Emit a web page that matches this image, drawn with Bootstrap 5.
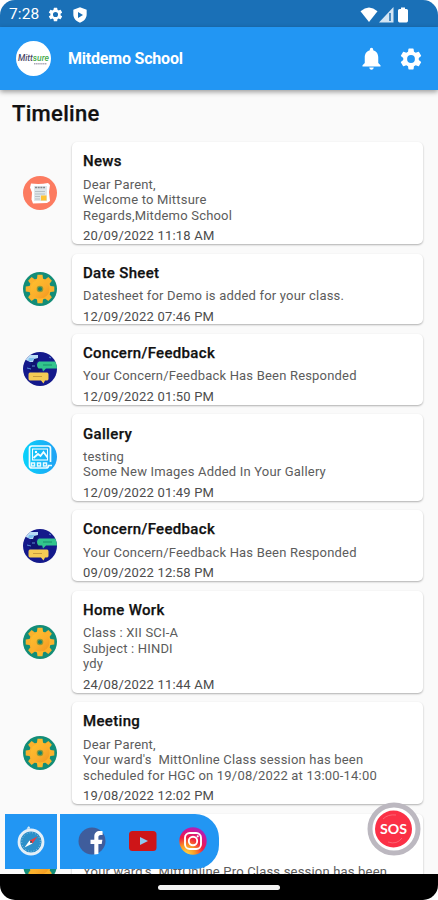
<!DOCTYPE html>
<html lang="en">
<head>
<meta charset="utf-8">
<meta name="viewport" content="width=device-width, initial-scale=1">
<title>Mitdemo School</title>
<link href="https://cdn.jsdelivr.net/npm/bootstrap@5.3.0/dist/css/bootstrap.min.css" rel="stylesheet">
<style>
body{font-family:Roboto,"Liberation Sans",sans-serif;background:#fff;color:#111}
.phone{width:438px;height:900px;border-radius:15px;background:#fafafa}
.status-bar{height:27px;background:#1a70b7;padding:2px 30px 0 9px}
.status-bar .clock{font-size:15.5px;letter-spacing:.1px;line-height:25px;width:38px}
.app-bar{height:63px;background:#2296f3;padding:0 14px 0 16px;box-shadow:0 2px 5px rgba(0,0,0,.38);z-index:2}
.app-bar .brand{font-size:16px;font-weight:700;letter-spacing:-.2px;margin-left:17px}
.app-bar .settings{margin-left:13.500px}
h1{font-size:22px;font-weight:500;line-height:26px;letter-spacing:.3px;margin:11px 0 15px 12px;-webkit-text-stroke:.25px #111}
.feed{gap:9.4px;padding-right:15px}
.entry-icon{width:72px;padding-left:22.5px}
.entry{border:0;border-radius:5px;padding:9.3px 11px .2px;box-shadow:0 1px 2px rgba(0,0,0,.3);background:#fff}
.entry h2{font-size:15px;font-weight:500;line-height:20px;letter-spacing:.33px;margin:0 0 5.3px;-webkit-text-stroke:.25px #111;color:#111}
.entry p,.entry time{font-size:13px;line-height:15.6px;letter-spacing:.19px;color:#5c5c5c;margin:0}
.entry p{white-space:pre;margin-bottom:4.9px}
.entry time{display:block;color:#4c4c4c;margin-bottom:.1px}
.home-bar{height:26px;background:#000}
.home-bar span{width:122px;height:5px;border-radius:3px;background:#f4f4f4}
.dock{left:5px;top:813.5px;height:55.5px;gap:3px}
.dock .tile{width:52px;background:#2296f3}
.dock .links{width:159px;background:#2296f3;border-radius:0 24px 24px 0;padding:0 12px 0 18px}
.sos{left:367px;top:802px}
svg{display:block;flex:none}
</style>
<script src="https://cdn.jsdelivr.net/npm/bootstrap@5.3.0/dist/js/bootstrap.bundle.min.js"></script>
</head>
<body>
<svg width="0" height="0" class="position-absolute" aria-hidden="true">
<defs>
<linearGradient id="gold" x1="0" y1="0" x2="1" y2="1"><stop offset="0" stop-color="#ffc12d"/><stop offset=".55" stop-color="#fbae2c"/><stop offset="1" stop-color="#f1951f"/></linearGradient>
<linearGradient id="sky" x1="0" y1="0" x2="1" y2="0"><stop offset="0" stop-color="#08d2fb"/><stop offset="1" stop-color="#20a2f4"/></linearGradient>
<radialGradient id="insta" cx=".25" cy="1" r="1.1"><stop offset="0" stop-color="#ffd84a"/><stop offset=".3" stop-color="#fb9a22"/><stop offset=".58" stop-color="#ef1d42"/><stop offset=".82" stop-color="#cf1597"/><stop offset="1" stop-color="#9b28c7"/></radialGradient>
<clipPath id="round"><circle cx="17" cy="17" r="17"/></clipPath>
<symbol id="cog" viewBox="0 0 24 24"><path fill-rule="evenodd" d="M19.14 12.94c.04-.3.06-.61.06-.94s-.02-.64-.07-.94l2.03-1.58a.49.49 0 0 0 .12-.61l-1.92-3.32a.49.49 0 0 0-.59-.22l-2.39.96c-.5-.38-1.03-.7-1.62-.94l-.36-2.54a.48.48 0 0 0-.48-.41h-3.84a.47.47 0 0 0-.47.41l-.36 2.54c-.59.24-1.13.57-1.62.94l-2.39-.96a.48.48 0 0 0-.59.22L2.74 8.87a.47.47 0 0 0 .12.61l2.03 1.58c-.05.3-.09.63-.09.94s.02.64.07.94l-2.03 1.58a.49.49 0 0 0-.12.61l1.92 3.32c.12.22.37.29.59.22l2.39-.96c.5.38 1.03.7 1.62.94l.36 2.54c.05.24.24.41.48.41h3.84c.24 0 .44-.17.47-.41l.36-2.54c.59-.24 1.13-.56 1.62-.94l2.39.96c.22.08.47 0 .59-.22l1.92-3.32a.47.47 0 0 0-.12-.61zM12 15.6A3.6 3.6 0 1 1 12 8.4a3.6 3.6 0 0 1 0 7.2z"/></symbol>
<symbol id="gear" viewBox="0 0 34 34"><circle cx="17" cy="17" r="17" fill="#128d78"/>
<g fill="#fbb12c"><circle cx="17" cy="17" r="10.8"/><path d="M13.800 8 14.500 2.700h5L20.200 8v18l-.7 5.300h-5L13.800 26z" fill="#fdb82d"/><path d="M13.800 8 14.500 2.700h5L20.200 8v18l-.7 5.300h-5L13.800 26z" transform="rotate(45 17 17)"/><path d="M13.800 8 14.500 2.700h5L20.200 8v18l-.7 5.300h-5L13.800 26z" transform="rotate(90 17 17)"/><path d="M13.800 8 14.500 2.700h5L20.200 8v18l-.7 5.300h-5L13.800 26z" transform="rotate(135 17 17)"/></g>
<circle cx="17" cy="17" r="9.500" fill="url(#gold)"/><circle cx="17" cy="17" r="3.300" fill="#8d9a38"/><circle cx="17" cy="17" r="2.100" fill="#188470"/></symbol>
<symbol id="chat" viewBox="0 0 34 34"><g clip-path="url(#round)"><path fill="#14198b" d="M0 0h34v34H0z"/><path fill="#0c105f" d="M10 2c9 2 5 7 2 10l7 5-4 4-9-2z" opacity=".6"/><path fill="#b9dcf6" d="M3 3h12v3l-4 1-1 3H7L3 8z"/><path fill="#7fc1ee" d="M6 6h6l-3 3H5z"/><path fill="#32c48d" d="M16 9.500h18v7H23l-3 3-.8-3H15.500q-1.500-1-1.500-3.500 0-3 2-3.500z"/><path stroke="#178f68" d="M20 13h9"/><path fill="#f4cb55" d="M7 20.500h17q1.500 0 1.500 2V27q0 1.500-2 1.500H22l-1.500 3-2.500-3H7q-1.500 0-1.500-2v-4q0-2 1.500-2z"/><path stroke="#c69b3d" d="M10 24.500h9"/><path stroke="#5a8fd4" d="M4 16l4 1M26 5l2 1M9 14h3"/></g></symbol>
<symbol id="news" viewBox="0 0 34 34"><circle cx="17" cy="17" r="17" fill="#fc7b60"/><path fill="#fff" d="M8 7.500q9 1 17-.5l2 2-1 7 1 9-3 2-14 .5-1.500-4 .5-7-2-5z"/><path fill="#dfe7ea" d="M11 10h13v15H11z"/><path stroke="#85888b" stroke-width="1.500" stroke-dasharray="2 .7" d="M12 11.500h10"/><path stroke="#b7c0c5" d="M12 15.500h10M12 18h10M12 20.500h5M12 23h5"/><path fill="#ffc334" d="M18 19.500h5.500v5H18z"/></symbol>
<symbol id="gallery" viewBox="0 0 34 34"><circle cx="17" cy="17" r="17" fill="url(#sky)"/><g fill="none" stroke="#f2fdff" stroke-width="1.700"><path d="M27.500 22V8.500q0-2.500-2.500-2.500H9Q6.500 6 6.500 8.500v17Q6.500 28 9 28h14q2.500 0 2.500-2.500H29"/><rect x="9.500" y="9" width="15" height="11" stroke-width="1.100"/><path d="m10.500 18 4.500-4 2.500 2 3-4 4 5.500" stroke-width="1.900"/></g><circle cx="13" cy="12" r="1.200" fill="#fff"/><g fill="none" stroke="#e9faff" stroke-width="1.500"><rect x="8.500" y="23" width="3" height="3"/><rect x="14.500" y="23" width="3" height="3"/><rect x="20.500" y="23" width="3" height="3"/></g></symbol>
</defs>
</svg>

<div class="phone position-relative overflow-hidden d-flex flex-column">
  <div class="status-bar d-flex align-items-center text-white flex-shrink-0">
    <span class="clock">7:28</span>
    <svg width="17" height="17" viewBox="0 0 24 24" fill="#fff"><use href="#cog"/></svg>
    <svg class="ms-2" width="16" height="16" viewBox="0 0 24 24" fill="#fff" fill-rule="evenodd"><path d="M12 .5 2 4v7c0 6 4 10.500 10 12.500C18 21.500 22 17 22 11V4zM9 7.500l7.500 4.500L9 16.500z"/></svg>
    <div class="ms-auto d-flex align-items-center">
      <svg width="18" height="16" viewBox="0 0 18 16" fill="#fff"><path d="M.5 4.200Q9-3 17.500 4.200L9 15z"/></svg>
      <svg width="16" height="16" viewBox="0 0 16 16"><path d="M15.500 0v15.500H1z" fill="#d3e5f4"/><path d="M12 6v8" stroke="#4b8cc2" stroke-width="2"/></svg>
      <svg width="10" height="16" viewBox="0 0 10 16" fill="#fff" class="ms-1"><path d="M3 .5h4V2h1.500Q10 2 10 3.500v10q0 2-1.500 2h-7Q0 15.500 0 13.500v-10Q0 2 1.500 2H3z"/></svg>
    </div>
  </div>

  <header class="app-bar d-flex align-items-center text-white flex-shrink-0 position-relative">
    <svg width="35" height="35" viewBox="0 0 35 35"><circle cx="17.500" cy="17.500" r="17.500" fill="#fff"/><g font-family="Roboto,sans-serif" font-style="italic" font-weight="500"><text x="2" y="20" font-size="8.500" fill="#4a4769" textLength="31" lengthAdjust="spacingAndGlyphs">Mitt<tspan fill="#45aa4c">sure</tspan></text></g><path d="M18 22.700h13" stroke="#aaa6b5" stroke-width="1.500" stroke-dasharray="1.500 .6"/></svg>
    <span class="brand">Mitdemo School</span>
    <svg class="ms-auto" width="27" height="27" viewBox="0 0 24 24" fill="#fff"><path d="M12 22c1.100 0 2-.9 2-2h-4c0 1.100.89 2 2 2zm6-6v-5c0-3.070-1.640-5.640-4.500-6.320V4a1.500 1.500 0 0 0-3 0v.68C7.630 5.360 6 7.920 6 11v5l-2 2v1h16v-1z"/></svg>
    <svg class="settings" width="26" height="26" viewBox="0 0 24 24" fill="#fff"><use href="#cog"/></svg>
  </header>

  <main class="flex-grow-1 overflow-hidden">
    <h1>Timeline</h1>
    <div class="feed d-flex flex-column">
      <div class="d-flex align-items-center"><div class="entry-icon"><svg width="34" height="34"><use href="#news"/></svg></div><article class="entry card flex-grow-1"><h2>News</h2><p>Dear Parent,
Welcome to Mittsure
Regards,Mitdemo School</p><time>20/09/2022 11:18 AM</time></article></div>
      <div class="d-flex align-items-center"><div class="entry-icon"><svg width="34" height="34"><use href="#gear"/></svg></div><article class="entry card flex-grow-1"><h2>Date Sheet</h2><p>Datesheet for Demo is added for your class.</p><time>12/09/2022 07:46 PM</time></article></div>
      <div class="d-flex align-items-center"><div class="entry-icon"><svg width="34" height="34"><use href="#chat"/></svg></div><article class="entry card flex-grow-1"><h2>Concern/Feedback</h2><p>Your Concern/Feedback Has Been Responded</p><time>12/09/2022 01:50 PM</time></article></div>
      <div class="d-flex align-items-center"><div class="entry-icon"><svg width="34" height="34"><use href="#gallery"/></svg></div><article class="entry card flex-grow-1"><h2>Gallery</h2><p>testing
Some New Images Added In Your Gallery</p><time>12/09/2022 01:49 PM</time></article></div>
      <div class="d-flex align-items-center"><div class="entry-icon"><svg width="34" height="34"><use href="#chat"/></svg></div><article class="entry card flex-grow-1"><h2>Concern/Feedback</h2><p>Your Concern/Feedback Has Been Responded</p><time>09/09/2022 12:58 PM</time></article></div>
      <div class="d-flex align-items-center"><div class="entry-icon"><svg width="34" height="34"><use href="#gear"/></svg></div><article class="entry card flex-grow-1"><h2>Home Work</h2><p>Class : XII SCI-A
Subject : HINDI
ydy</p><time>24/08/2022 11:44 AM</time></article></div>
      <div class="d-flex align-items-center"><div class="entry-icon"><svg width="34" height="34"><use href="#gear"/></svg></div><article class="entry card flex-grow-1"><h2>Meeting</h2><p>Dear Parent,
Your ward's  MittOnline Class session has been
scheduled for HGC on 19/08/2022 at 13:00-14:00</p><time>19/08/2022 12:02 PM</time></article></div>
      <div class="d-flex align-items-center"><div class="entry-icon"><svg width="34" height="34"><use href="#gear"/></svg></div><article class="entry card flex-grow-1"><h2>&nbsp;</h2><p>&nbsp;
Your ward's  MittOnline Pro Class session has been
&nbsp;</p><time>&nbsp;</time></article></div>
    </div>
  </main>

  <div class="home-bar d-flex align-items-center justify-content-center flex-shrink-0"><span></span></div>

  <nav class="dock position-absolute d-flex">
    <div class="tile d-flex align-items-center justify-content-center">
      <svg width="28" height="30" viewBox="0 0 28 30"><circle cx="14" cy="16" r="12" fill="#2b8fc9" stroke="#e3eff8" stroke-width="2.800"/><path d="M9.500 2.500 12 0l1 2.500z" fill="#dcebf6"/><path d="M10.500 3q1-2 2.500-1" stroke="#dcebf6" fill="none"/><circle cx="14" cy="16" r="9.300" fill="none" stroke="#9bcbea" stroke-dasharray=".8 2"/><path d="m20.500 10.500-5 7-3-3z" fill="#e53e43"/><path d="m7.500 21.500 5-7 3 3z" fill="#fff"/><circle cx="14" cy="16" r="1" fill="#26485f"/></svg>
    </div>
    <div class="links d-flex align-items-center justify-content-between">
      <svg width="28" height="28" viewBox="0 0 28 28"><circle cx="14" cy="14" r="13.500" fill="#3f5d9c"/><path d="M16.300 27.500V17h-3.800v-4.200h3.800V9.700c0-3.800 2.200-5.600 5.600-5.600 1.500 0 2.700.2 2.700.2v3.700h-1.900c-1.800 0-2.300 1-2.300 2.200v2.600h4l-.7 4.200h-3.300v10z" fill="#fff"/></svg>
      <svg width="28" height="20" viewBox="0 0 28 20"><rect width="27.500" height="20" rx="3.500" fill="#ce1518"/><path d="m11 6 8 4-8 4z" fill="#8ec9f0"/></svg>
      <svg width="28" height="28" viewBox="0 0 28 28"><circle cx="14" cy="14" r="13.700" fill="url(#insta)"/><g fill="none" stroke="#fff" stroke-width="1.900"><rect x="6" y="6" width="16" height="16" rx="4.800"/><circle cx="14" cy="14" r="4.200"/></g><circle cx="18.700" cy="9.300" r="1.100" fill="#fff"/></svg>
    </div>
  </nav>

  <div class="sos position-absolute">
    <svg width="54" height="54" viewBox="0 0 54 54"><circle cx="27" cy="27" r="24" fill="#fff" stroke="#bcb8c0" stroke-width="5"/><circle cx="26.500" cy="27" r="18.500" fill="#fb3046"/><path d="M16 17q5-5 13-4M21 40q9 3 14-4" fill="none" stroke="#fc6473" stroke-width="1"/><text x="26.500" y="31.500" text-anchor="middle" font-family="Lato,sans-serif" font-weight="700" font-size="13" textLength="27" lengthAdjust="spacingAndGlyphs" fill="#fff">SOS</text></svg>
  </div>
</div>
</body>
</html>
